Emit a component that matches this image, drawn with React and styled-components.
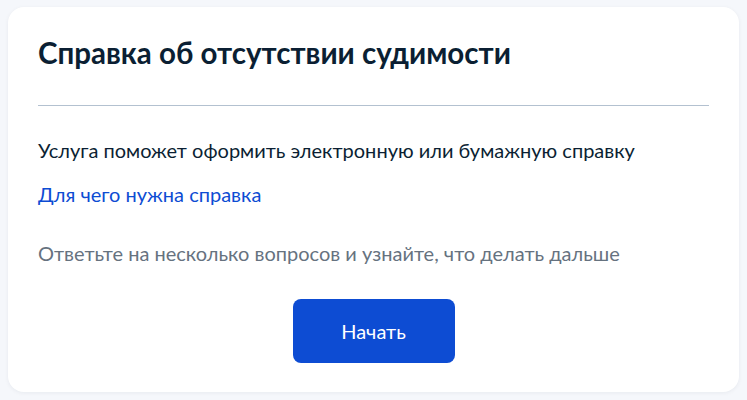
import styled, { createGlobalStyle } from 'styled-components';

const GlobalStyle = createGlobalStyle`
  html, body {
    margin: 0;
    padding: 0;
    background: #f5f7fb;
    font-family: Lato, "Noto Sans", sans-serif;
  }
`;

const Page = styled.div`
  padding: 7px 8px 8px 8px;
`;

const Card = styled.section`
  background: #ffffff;
  border-radius: 16px;
  box-shadow: 0 1px 4px rgba(11, 31, 51, 0.06);
  padding: 28px 30px 29px 30px;
  display: flex;
  flex-direction: column;
`;

const Title = styled.h1`
  margin: 0;
  font-size: 29.5px;
  line-height: 36px;
  font-weight: 700;
  color: #0b1f33;
`;

const Divider = styled.hr`
  margin: 34px 0 32px;
  border: 0;
  border-top: 1px solid #b3c1d0;
`;

const Text = styled.p`
  margin: 0;
  font-size: 20px;
  line-height: 24px;
  color: #0b1f33;
`;

const Link = styled.a`
  display: block;
  margin-top: 20px;
  font-size: 20px;
  line-height: 24px;
  color: #0d4cd3;
  text-decoration: none;
`;

const Hint = styled(Text)`
  margin-top: 35px;
  color: #66727f;
`;

const Actions = styled.div`
  display: flex;
  justify-content: center;
  margin-top: 34px;
`;

const Button = styled.button`
  width: 162px;
  height: 64px;
  border: 0;
  border-radius: 8px;
  background: #0d4cd3;
  color: #ffffff;
  font-family: Lato, "Noto Sans", sans-serif;
  font-size: 20px;
  cursor: pointer;
`;

export default function App() {
  return (
    <Page>
      <GlobalStyle />
      <Card>
        <Title>Справка об отсутствии судимости</Title>
        <Divider />
        <Text>Услуга поможет оформить электронную или бумажную справку</Text>
        <Link href="#">Для чего нужна справка</Link>
        <Hint>Ответьте на несколько вопросов и узнайте, что делать дальше</Hint>
        <Actions>
          <Button>Начать</Button>
        </Actions>
      </Card>
    </Page>
  );
}
